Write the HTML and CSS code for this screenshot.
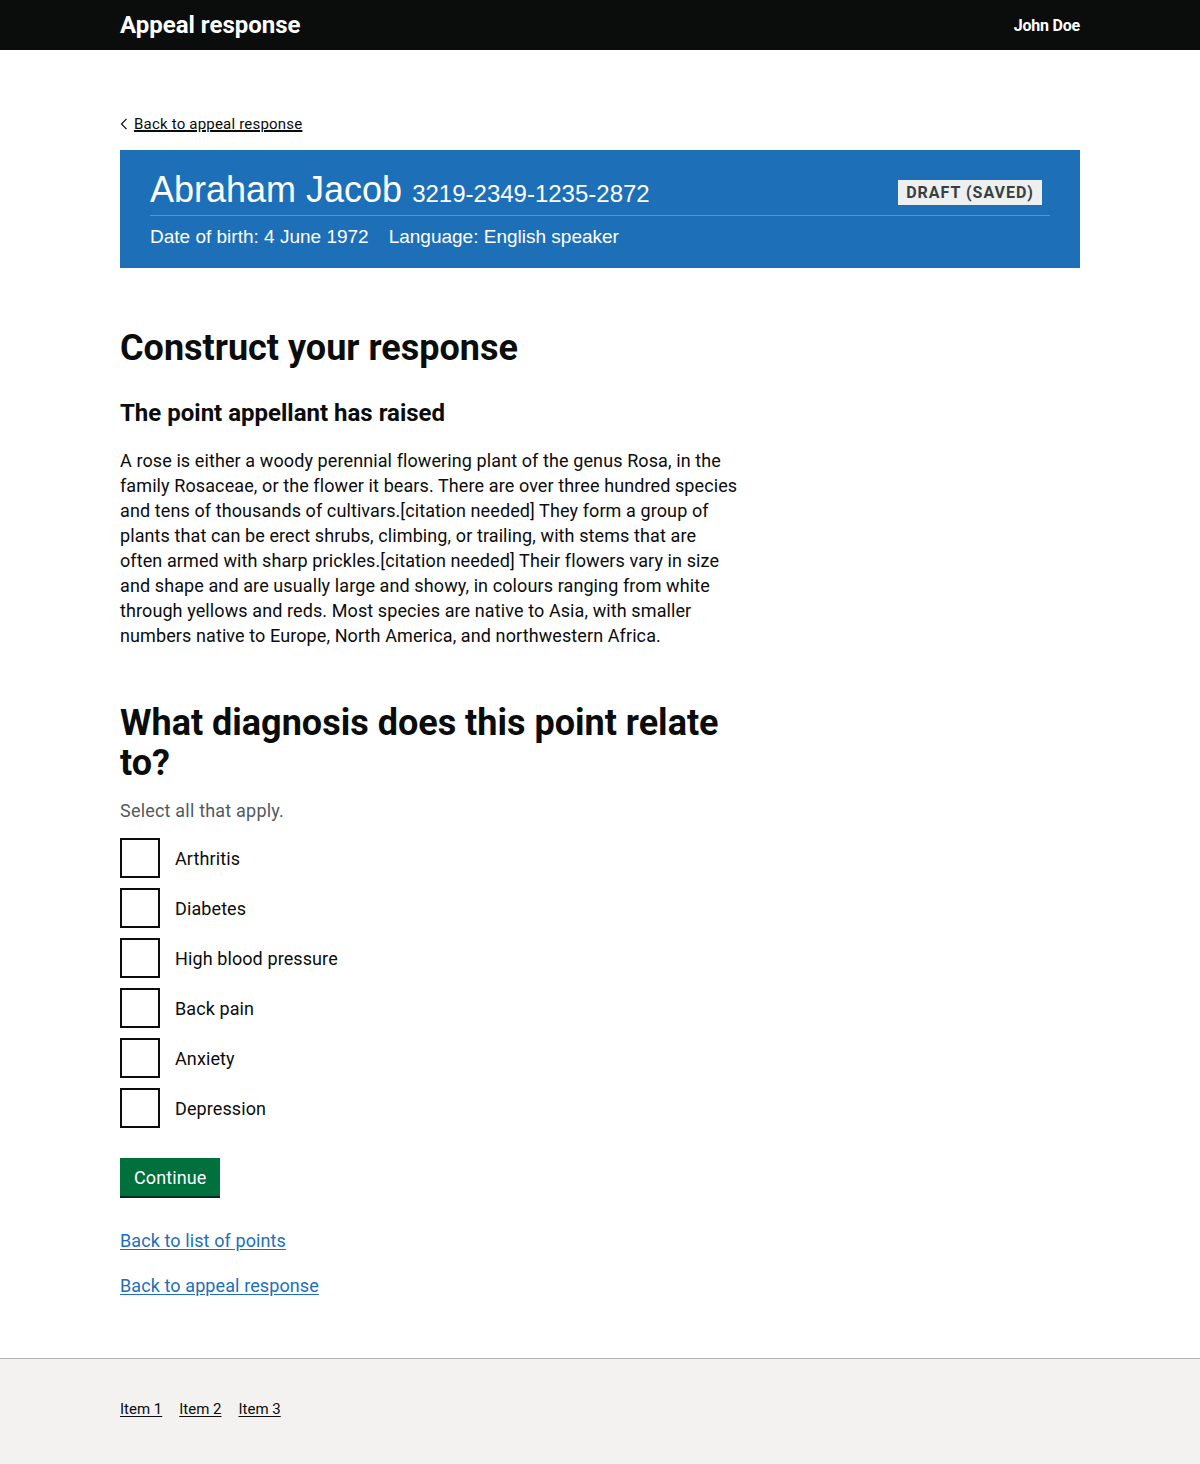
FILE: index.html
```html
<!DOCTYPE html>
<html lang="en">
<head>
<meta charset="utf-8">
<title>Appeal response</title>
<link rel="stylesheet" href="styles.css">
</head>
<body>
<header class="header">
  <div class="width-container header__inner">
    <a class="header__title" href="#">Appeal response</a>
    <span class="header__user">John Doe</span>
  </div>
</header>

<div class="width-container">
  <a class="back-link" href="#">
    <svg class="back-link__chevron" width="8" height="12" viewBox="0 0 8 12" aria-hidden="true"><path d="M6.5 0.8 L1.5 6 L6.5 11.2" fill="none" stroke="#0b0c0c" stroke-width="1.2"/></svg>
    <span>Back to appeal response</span>
  </a>

  <div class="banner">
    <div class="banner__top">
      <h2 class="banner__name">Abraham Jacob <span class="banner__id">3219-2349-1235-2872</span></h2>
      <strong class="tag">DRAFT (SAVED)</strong>
    </div>
    <div class="banner__meta">
      <span>Date of birth: 4 June 1972</span>
      <span>Language: English speaker</span>
    </div>
  </div>

  <main class="main">
    <div class="column">
      <h1 class="heading-l">Construct your response</h1>
      <h2 class="heading-m">The point appellant has raised</h2>
      <p class="body">A rose is either a woody perennial flowering plant of the genus Rosa, in the family Rosaceae, or the flower it bears. There are over three hundred species and tens of thousands of cultivars.[citation needed] They form a group of plants that can be erect shrubs, climbing, or trailing, with stems that are often armed with sharp prickles.[citation needed] Their flowers vary in size and shape and are usually large and showy, in colours ranging from white through yellows and reds. Most species are native to Asia, with smaller numbers native to Europe, North America, and northwestern Africa.</p>

      <fieldset class="fieldset">
        <legend class="heading-l legend">What diagnosis does this point relate to?</legend>
        <div class="hint">Select all that apply.</div>
        <div class="checkboxes">
          <label class="checkbox"><input type="checkbox"><span class="checkbox__box"></span><span>Arthritis</span></label>
          <label class="checkbox"><input type="checkbox"><span class="checkbox__box"></span><span>Diabetes</span></label>
          <label class="checkbox"><input type="checkbox"><span class="checkbox__box"></span><span>High blood pressure</span></label>
          <label class="checkbox"><input type="checkbox"><span class="checkbox__box"></span><span>Back pain</span></label>
          <label class="checkbox"><input type="checkbox"><span class="checkbox__box"></span><span>Anxiety</span></label>
          <label class="checkbox"><input type="checkbox"><span class="checkbox__box"></span><span>Depression</span></label>
        </div>
      </fieldset>

      <button class="button" type="button">Continue</button>

      <p class="link-row"><a class="link" href="#">Back to list of points</a></p>
      <p class="link-row"><a class="link" href="#">Back to appeal response</a></p>
    </div>
  </main>
</div>

<footer class="footer">
  <div class="width-container">
    <ul class="footer__list">
      <li><a href="#">Item 1</a></li>
      <li><a href="#">Item 2</a></li>
      <li><a href="#">Item 3</a></li>
    </ul>
  </div>
</footer>
</body>
</html>
```

FILE: styles.css
```css
* { box-sizing: border-box; }

html, body {
  margin: 0;
  padding: 0;
}

body {
  font-family: Roboto, "Liberation Sans", Arial, sans-serif;
  color: #0b0c0c;
  background: #fff;
  -webkit-font-smoothing: antialiased;
}

.width-container {
  width: 960px;
  margin: 0 auto;
}

/* Header */
.header {
  background: #0b0c0c;
  height: 50px;
}
.header__inner {
  display: flex;
  justify-content: space-between;
  align-items: center;
  height: 50px;
}
.header__title {
  color: #fff;
  text-decoration: none;
  font-weight: 700;
  font-size: 24px;
  letter-spacing: 0;
}
.header__user {
  color: #fff;
  font-weight: 700;
  font-size: 16px;
  letter-spacing: -0.2px;
}

/* Back link */
.back-link {
  display: inline-flex;
  align-items: center;
  gap: 6px;
  margin-top: 64px;
  color: #0b0c0c;
  font-size: 15px;
  line-height: 20px;
  letter-spacing: 0.2px;
}
.back-link span {
  text-decoration: underline;
  text-underline-offset: 2px;
}
.back-link__chevron { display: block; }

/* Banner */
.banner {
  margin-top: 16px;
  background: #1d70b8;
  color: #fff;
  padding: 20px 30px 19px;
  font-family: "Liberation Sans", Arial, sans-serif;
}
.banner__top {
  display: flex;
  justify-content: space-between;
  align-items: center;
  padding-bottom: 1px;
  border-bottom: 1px solid #5694ca;
}
.banner__name {
  margin: 0;
  font-weight: 400;
  font-size: 36px;
  line-height: 40px;
}
.banner__id {
  font-size: 24px;
}
.tag {
  display: inline-block;
  margin-right: 8px;
  background: #eeefef;
  color: #383f43;
  font-family: Roboto, "Liberation Sans", sans-serif;
  font-weight: 700;
  font-size: 16px;
  letter-spacing: 1px;
  line-height: 25px;
  padding: 0 8px;
}
.banner__meta {
  display: flex;
  gap: 20px;
  padding-top: 8px;
  font-size: 19px;
  line-height: 25px;
}

/* Main */
.main {
  padding-top: 60px;
  padding-bottom: 40px;
}
.column {
  width: 630px;
}
.heading-l {
  margin: 0 0 30px;
  font-weight: 700;
  font-size: 36px;
  line-height: 40px;
  letter-spacing: 0;
}
.heading-m {
  margin: 0 0 20px;
  font-weight: 700;
  font-size: 24px;
  line-height: 30px;
  letter-spacing: 0;
}
.body {
  width: 620px;
  margin: 0 0 55px;
  font-size: 18px;
  line-height: 25px;
  letter-spacing: 0.1px;
}

.fieldset {
  margin: 0 0 30px;
  padding: 0;
  border: 0;
  min-width: 0;
}
.legend {
  padding: 0;
  margin-bottom: 15px;
}
.hint {
  color: #505a5f;
  font-size: 18px;
  line-height: 25px;
  letter-spacing: 0.2px;
  margin-bottom: 15px;
}
.checkboxes {
  display: flex;
  flex-direction: column;
  gap: 10px;
}
.checkbox {
  display: flex;
  align-items: center;
  gap: 15px;
  font-size: 18px;
  line-height: 25px;
  letter-spacing: 0.1px;
  cursor: pointer;
}
.checkbox input {
  position: absolute;
  opacity: 0;
  width: 0;
  height: 0;
}
.checkbox__box {
  width: 40px;
  height: 40px;
  border: 2px solid #0b0c0c;
  flex: none;
}

.button {
  display: block;
  font-family: inherit;
  font-size: 18px;
  line-height: 19px;
  letter-spacing: 0.1px;
  color: #fff;
  background: #00703c;
  border: 2px solid transparent;
  border-radius: 0;
  box-shadow: 0 2px 0 #002d18;
  padding: 8px 12px 7px;
  margin: 0 0 32px;
  cursor: pointer;
}

.link-row {
  margin: 0 0 20px;
  font-size: 18px;
  line-height: 25px;
  letter-spacing: 0.1px;
}
.link {
  color: #1d70b8;
  text-decoration: underline;
  text-underline-offset: 2px;
}

/* Footer */
.footer {
  background: #f3f2f1;
  border-top: 1px solid #b1b4b6;
  padding: 40px 0 45px;
}
.footer__list {
  display: flex;
  gap: 17px;
  list-style: none;
  margin: 0;
  padding: 0;
  font-size: 15px;
  line-height: 20px;
  letter-spacing: 0;
}
.footer__list a {
  color: #0b0c0c;
  text-underline-offset: 2px;
}
```
